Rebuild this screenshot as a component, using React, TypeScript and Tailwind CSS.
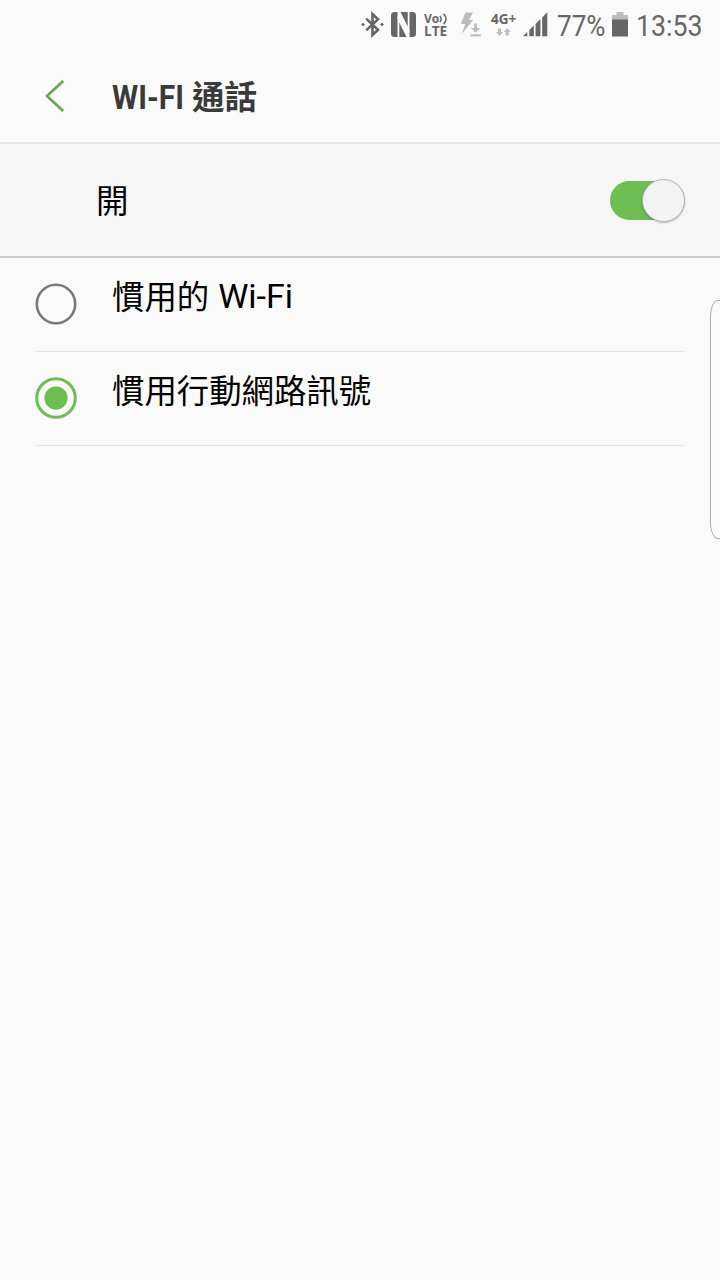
import clsx from "clsx";
import { useState } from "react";

const options = [
  { id: "wifi", label: "慣用的", latin: "Wi-Fi" },
  { id: "cellular", label: "慣用行動網路訊號", latin: "" },
];

function StatusBar() {
  return (
    <div className="flex h-[50px] items-start text-[#666666]">
      {/* Bluetooth */}
      <svg className="ml-[361px] mt-[11px] h-7 w-[23px] shrink-0" viewBox="0 0 23 28" fill="none">
        <path d="M5.2 7.6 L17 18.8 L11.5 24 V3 L17 8.2 L5.2 19.4" stroke="currentColor" strokeWidth="2.6" />
        <path d="M0 13.5 L2 11.7 L4 13.5 L2 15.3 Z M19 13.5 L21 11.7 L23 13.5 L21 15.3 Z" fill="currentColor" />
      </svg>

      {/* NFC */}
      <svg className="ml-[7px] mt-[12px] h-[25px] w-[25px] shrink-0" viewBox="0 0 25 25">
        <rect width="25" height="25" rx="3.5" fill="currentColor" />
        <path d="M7.4 25 V4 M17.6 0 V21" fill="none" stroke="#fafafa" strokeWidth="1.8" />
        <path d="M6.5 0 H9.5 L18.5 18 V25 H15.5 L6.5 7 Z" fill="#fafafa" />
      </svg>

      {/* VoLTE */}
      <div className="ml-[8px] mt-[12px] w-[24px] shrink-0 font-['Open_Sans',sans-serif] font-bold">
        <div className="flex h-[13px] items-start">
          <span className="w-[15px] origin-left scale-x-[0.93] text-[13px] leading-3">Vo</span>
          <svg className="mt-[1px] h-[12px] w-[9px]" viewBox="0 0 9 12" fill="none" stroke="currentColor" strokeWidth="1.5">
            <path d="M0.8 3 Q3.6 6 0.8 9 M4.6 0.8 Q9.4 6 4.6 11.2" />
          </svg>
        </div>
        <div className="origin-left text-[13.5px] leading-[13px]">LTE</div>
      </div>

      {/* Fast download */}
      <svg className="ml-[12px] mt-[12px] h-[25px] w-[22px] shrink-0" viewBox="0 0 22 25" fill="#bdbdbd">
        <path d="M5.4 0.5 H13 L9 8 H13.2 L1.6 22 L5.4 12 H0.8 Z" />
        <path d="M14.2 11.5 H17 V16 H20.4 L15.6 20.8 L10.8 16 H14.2 Z M10.5 22.2 H20.8 V24.4 H10.5 Z" />
      </svg>

      {/* 4G+ */}
      <div className="ml-[9px] mt-[12px] w-[26px] shrink-0">
        <div className="origin-left scale-x-[1.02] font-['Open_Sans',sans-serif] text-[13.3px] font-bold leading-[14px]">4G+</div>
        <svg className="ml-[5px] mt-[2px] h-[9px] w-[16px]" viewBox="0 0 16 9" fill="#bdbdbd">
          <path d="M2 0.5 H5 V4 H7 L3.5 8 L0 4 H2 Z M9.7 7.5 H12.7 V4 H14.7 L11.2 0 L7.7 4 H9.7 Z" />
        </svg>
      </div>

      {/* Signal */}
      <svg className="ml-[6px] mt-[12px] h-[25px] w-[25px] shrink-0" viewBox="0 0 25 25" fill="currentColor">
        <path d="M0 24.3 L4.3 20 V24.3 Z M6.3 18 L10.8 13.6 V24.3 H6.3 Z M12.6 11.8 L17.4 7 V24.3 H12.6 Z M19.2 5.4 L24.3 0.3 V24.3 H19.2 Z" />
      </svg>

      <span className="ml-[9px] mt-[8px] w-[54px] shrink-0 origin-left scale-x-[0.87] font-[Roboto,sans-serif] text-[30px] leading-9">
        77%
      </span>

      {/* Battery */}
      <svg className="ml-[1px] mt-[12px] h-[25px] w-4 shrink-0" viewBox="0 0 16 25">
        <path d="M4.5 0 H11.5 V3 H16 V8 H0 V3 H4.5 Z" fill="#bdbdbd" />
        <rect y="7.5" width="16" height="17" fill="currentColor" />
      </svg>

      <span className="ml-[8px] mt-[8px] shrink-0 origin-left scale-x-[0.89] font-[Roboto,sans-serif] text-[30px] leading-9">
        13:53
      </span>
    </div>
  );
}

function Header() {
  return (
    <header className="flex h-[94px] items-start border-b-2 border-[#e6e6e6]">
      <button aria-label="返回" className="ml-[45px] mt-[30px]">
        <svg className="h-8 w-5" viewBox="0 0 20 32" fill="none">
          <path d="M18.2 0.9 L2 16 L18.2 31.1" stroke="#67aa52" strokeWidth="2.7" />
        </svg>
      </button>
      <h1 className="ml-[47px] mt-[22px] flex h-12 font-bold leading-[48px] text-[#3a3a3a]">
        <span className="mt-px w-[80px] origin-left scale-x-[0.88] whitespace-nowrap font-[Roboto,sans-serif] text-[34px]">
          WI-FI
        </span>
        <span className="-mt-px font-['Noto_Sans_CJK_TC',sans-serif] text-[32.5px]">通話</span>
      </h1>
    </header>
  );
}

function Toggle({ on, onChange }: { on: boolean; onChange: () => void }) {
  return (
    <button
      role="switch"
      aria-checked={on}
      onClick={onChange}
      className="flex h-11 w-[75px] items-center"
    >
      <span
        className={clsx(
          "flex h-[39px] w-[75px] items-center rounded-full",
          on
            ? "justify-end bg-linear-to-r from-[#6ebe53] from-75% to-transparent to-75%"
            : "justify-start bg-[#bdbdbd]"
        )}
      >
        <span className="size-[43px] shrink-0 rounded-full border border-[#b4b4b4] bg-[#f3f3f3] shadow-[0_1px_2px_rgba(0,0,0,0.25)]" />
      </span>
    </button>
  );
}

function Radio({ checked }: { checked: boolean }) {
  return (
    <svg className="-ml-px mb-px size-[42px] shrink-0" viewBox="0 0 42 42" fill="none">
      {checked ? (
        <>
          <circle cx="21" cy="21" r="19.3" stroke="#70bd57" strokeWidth="3" />
          <circle cx="21" cy="21" r="11.6" fill="#6ebe53" />
        </>
      ) : (
        <circle cx="21" cy="21" r="19.2" stroke="#7a7a7a" strokeWidth="2.6" />
      )}
    </svg>
  );
}

export default function App() {
  const [enabled, setEnabled] = useState(true);
  const [selected, setSelected] = useState("cellular");

  return (
    <div className="relative h-[1280px] w-[720px] overflow-hidden bg-[#fafafa]">
      <StatusBar />
      <Header />

      <section className="flex h-[114px] items-center justify-between border-b-2 border-[#cccccc] bg-[#f6f6f6] pl-[96px] pr-[35px]">
        <span className="mb-[3px] font-['Noto_Sans_CJK_TC',sans-serif] text-[32.5px] leading-[48px] text-black">
          {enabled ? "開" : "關"}
        </span>
        <Toggle on={enabled} onChange={() => setEnabled(!enabled)} />
      </section>

      <div role="radiogroup" className="px-9">
        {options.map((option) => (
          <button
            key={option.id}
            role="radio"
            aria-checked={selected === option.id}
            onClick={() => setSelected(option.id)}
            className="flex h-[94px] w-full items-center border-b border-[#e4e4e4] text-left"
          >
            <Radio checked={selected === option.id} />
            <span className="mb-[19px] ml-[35px] flex h-12 gap-[9px] leading-[48px] text-black">
              <span className="font-['Noto_Sans_CJK_TC',sans-serif] text-[32.4px]">
                {option.label}
              </span>
              {option.latin && (
                <span className="mt-px font-[Roboto,sans-serif] text-[34px]">{option.latin}</span>
              )}
            </span>
          </button>
        ))}
      </div>

      {/* Edge panel handle */}
      <div className="absolute -right-3 top-[300px] h-[239px] w-[22px] rounded-[8px/16px] border border-[#adadad] bg-[#fcfcfc]" />
    </div>
  );
}
